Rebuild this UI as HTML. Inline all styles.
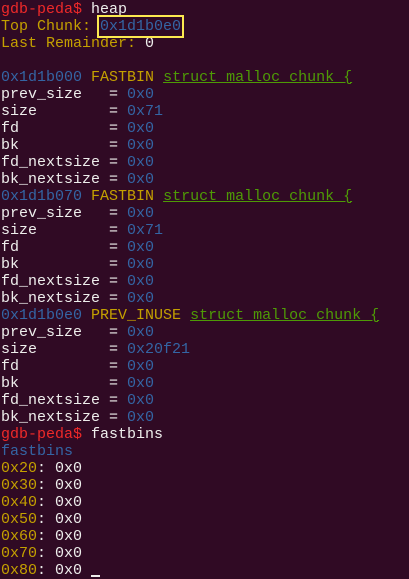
<!DOCTYPE html><html><head><style>
body{margin:0;background:#300a24;width:409px;height:579px;overflow:hidden}
pre{margin:0;padding:1px 0 0 1px;font-family:"Liberation Mono",monospace;font-size:15px;line-height:17px;color:#eeeeec;white-space:pre}
.r{color:#ef2929}.y{color:#c4a000}.b{color:#3465a4}.g{color:#4e9a06;text-decoration:underline}
.box{outline:2px solid #fce94f;outline-offset:1px}
.cur{display:inline-block;width:9px;height:2px;background:#eeeeec;vertical-align:-3px}
</style></head><body><pre><span class="r">gdb-peda$</span> heap
<span class="y">Top Chunk: </span><span class="b box">0x1d1b0e0</span>
<span class="y">Last Remainder: </span>0

<span class="b">0x1d1b000</span> <span class="y">FASTBIN</span> <span class="g">struct malloc_chunk {</span>
prev_size   = <span class="b">0x0</span>
size        = <span class="b">0x71</span>
fd          = <span class="b">0x0</span>
bk          = <span class="b">0x0</span>
fd_nextsize = <span class="b">0x0</span>
bk_nextsize = <span class="b">0x0</span>
<span class="b">0x1d1b070</span> <span class="y">FASTBIN</span> <span class="g">struct malloc_chunk {</span>
prev_size   = <span class="b">0x0</span>
size        = <span class="b">0x71</span>
fd          = <span class="b">0x0</span>
bk          = <span class="b">0x0</span>
fd_nextsize = <span class="b">0x0</span>
bk_nextsize = <span class="b">0x0</span>
<span class="b">0x1d1b0e0</span> <span class="y">PREV_INUSE</span> <span class="g">struct malloc_chunk {</span>
prev_size   = <span class="b">0x0</span>
size        = <span class="b">0x20f21</span>
fd          = <span class="b">0x0</span>
bk          = <span class="b">0x0</span>
fd_nextsize = <span class="b">0x0</span>
bk_nextsize = <span class="b">0x0</span>
<span class="r">gdb-peda$</span> fastbins
<span class="b">fastbins</span>
<span class="y">0x20</span>: 0x0
<span class="y">0x30</span>: 0x0
<span class="y">0x40</span>: 0x0
<span class="y">0x50</span>: 0x0
<span class="y">0x60</span>: 0x0
<span class="y">0x70</span>: 0x0
<span class="y">0x80</span>: 0x0 <span class="cur"></span></pre></body></html>
